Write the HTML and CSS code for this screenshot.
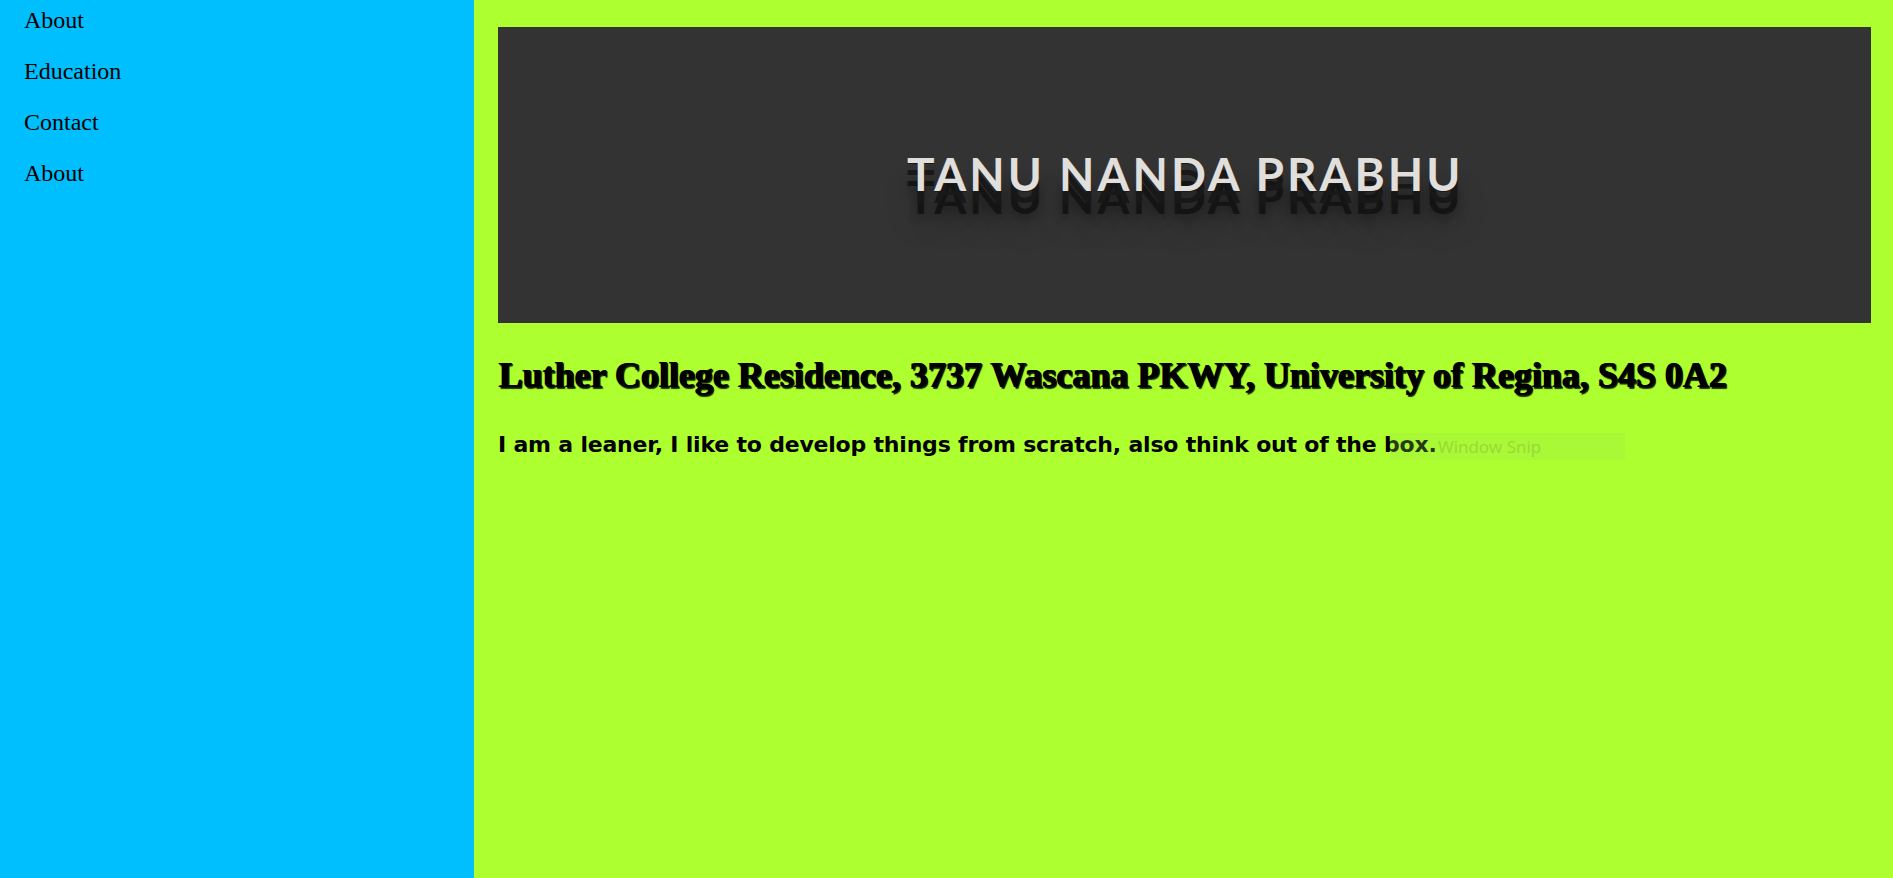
FILE: index.html
```
<!DOCTYPE html>
<html lang="en">
<head>
<meta charset="utf-8">
<title>Tanu Nanda Prabhu</title>
<link rel="stylesheet" href="styles.css">
</head>
<body>
<div class="page">
  <nav class="sidenav">
    <a href="#about">About</a>
    <a href="#education">Education</a>
    <a href="#contact">Contact</a>
    <a href="#about">About</a>
  </nav>
  <main class="main">
    <header class="banner">
      <h1 class="banner-title">TANU NANDA PRABHU</h1>
    </header>
    <h2 class="address">Luther College Residence, 3737 Wascana PKWY, University of Regina, S4S 0A2</h2>
    <p class="intro">I am a leaner, I like to develop things from scratch, also think out of the box.</p>
  </main>
</div>
<div class="snip-tip"><span>Window Snip</span></div>
</body>
</html>
```
FILE: styles.css
```
html, body {
  margin: 0;
  padding: 0;
  height: 100%;
}

body {
  font-family: "Liberation Serif", "Times New Roman", serif;
  background: #adff2f;
}

.page {
  display: flex;
  min-height: 878px;
}

.sidenav {
  width: 474px;
  flex: none;
  background: #00bfff;
  margin-top: -5px;
}

.sidenav a {
  display: block;
  padding-left: 24px;
  font-size: 24px;
  line-height: 51px;
  color: #000;
  text-decoration: none;
}

.main {
  flex: 1;
  background: #adff2f;
  padding: 27px 22px 0 24px;
}

.banner {
  height: 296px;
  background: #333333;
  display: flex;
  align-items: flex-start;
  padding-left: 409px;
  box-sizing: border-box;
}

.banner-title {
  margin: 0;
  padding-top: 124px;
  font-family: Lato, "Open Sans", sans-serif;
  font-weight: 700;
  font-size: 46px;
  line-height: 46px;
  letter-spacing: 3px;
  color: #e0dfdb;
  text-shadow:
    0 1px 0 #1a1a1a,
    0 12px 0 #181818,
    0 23px 0 #141414,
    0 26px 12px rgba(0, 0, 0, 0.4),
    0 34px 30px rgba(0, 0, 0, 0.25);
}

.address {
  margin: 31px 0 0;
  font-family: "Liberation Serif", "Times New Roman", serif;
  font-weight: 700;
  font-size: 36px;
  line-height: 42px;
  color: #000;
  text-shadow: 1px 0 0 #000, 2px 1px 0 #0c1a00, 2px 2px 1px #1b3300;
}

.intro {
  margin: 34px 0 0;
  font-family: "Comic Sans MS", "DejaVu Sans", sans-serif;
  font-weight: 700;
  font-size: 22px;
  line-height: 30px;
  letter-spacing: -0.2px;
  color: #000;
}

.snip-tip {
  position: absolute;
  left: 1390px;
  top: 433px;
  width: 235px;
  height: 27px;
  background: rgba(160, 230, 80, 0.25);
  padding-left: 48px;
  box-sizing: border-box;
}

.snip-tip span {
  font-family: "Open Sans", sans-serif;
  font-size: 17px;
  line-height: 27px;
  color: #98d838;
}
```
